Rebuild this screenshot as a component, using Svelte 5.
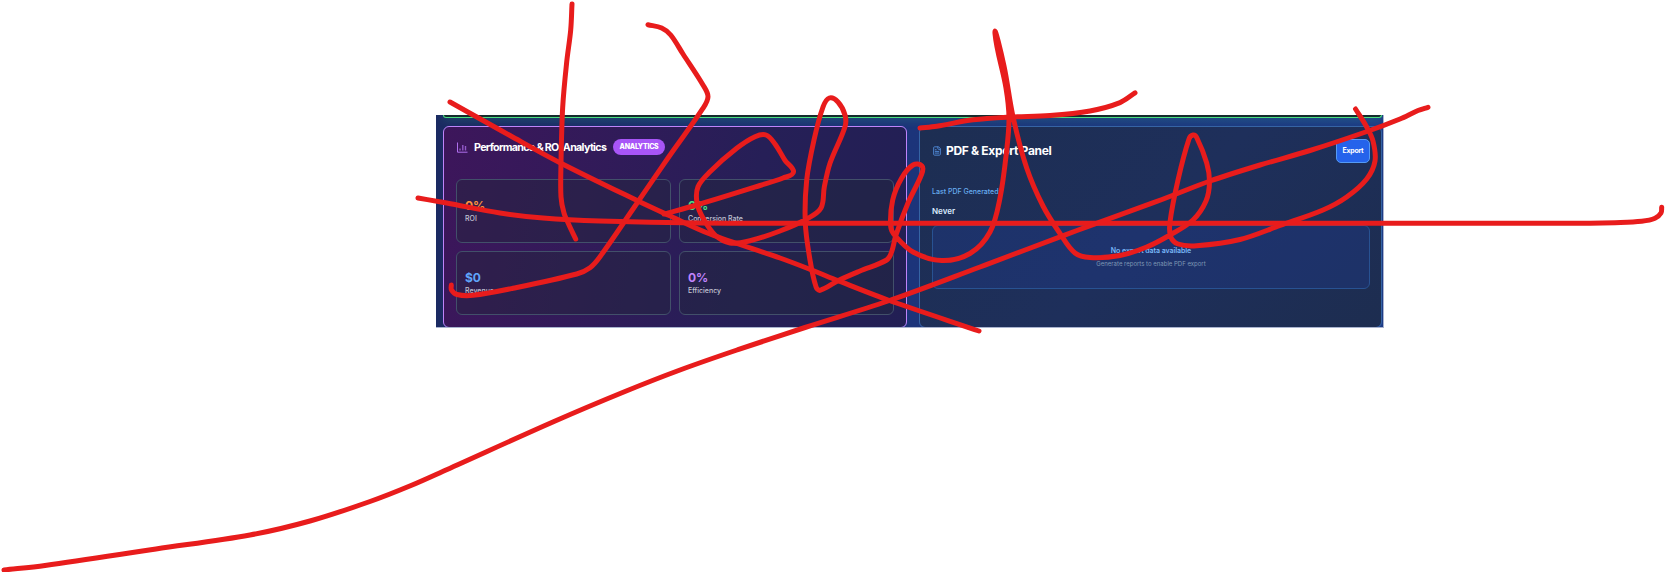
<script>
  const metrics = [
    { value: '0%', label: 'ROI', tone: 'orange' },
    { value: '0%', label: 'Conversion Rate', tone: 'green' },
    { value: '$0', label: 'Revenue', tone: 'blue' },
    { value: '0%', label: 'Efficiency', tone: 'purple' }
  ];

  // Pen strokes, each a list of "x,y" points joined by a smooth curve.
  const strokes = [
    '572,4 570.7,30 566.7,62 562.7,107 561,163 561,197 564,213 569,225 575.7,239',
    '648,24.7 661.7,28 670.7,35 683,54 703,85 708,96.7 702.7,108.7 668,158 633,209 600,256.7 590,267.7 576.7,274 513,288.3 473,295.3 457,294.5 451.5,290 451.3,285',
    '450,102 510,135.5 560,162.7 638,201 668,215 710,234 780,258 811.7,270 838,280.7 888,300 979,331',
    '418,198 446.7,203 500,213 543,218 600,221 700,223 900,223.3 1300,223.3 1590,223.2 1615,222.7 1641.7,221.3 1655,218.3 1661,213 1661.7,207.3',
    '664,214 696.7,205 760,185.5 783,178 793.5,172 785,160.3 775,144 766,135 755,136.7 736.7,148.3 710,171.7 698,186.7 697,203 703,218 715,235 730,243 750,240.7 780,231 806.7,219 821,208 824.3,187 830,163.3 845,126.7 845,115 838,102 829.3,98 823,107 814,140 806.7,180 805.3,223 810,260 816,286.7 820,290.3 838,280.7 860,271 886.7,260 891.7,251.7 896,235 908,203 921.7,174 922,166 913,165 901.7,178 892.7,200 890.7,226.7 895,235.7 913,252 941.7,260.5 970,253.5 990,232 1000,198 1006.7,150 1009,118 1006,88 995,33.5 1004,66 1013,116.7 1026.7,168 1043,206 1060,233.5 1075,253 1090,257.5 1120,255.5 1146.7,247 1170,235 1193,220 1206,201 1209.5,182 1206.7,163 1196.7,137.5 1193,135 1189,139 1178,180 1170,222 1170.7,236.7 1178,244 1196.7,245.7 1240,239.5 1280,225.5 1323,210 1346.7,197 1366.7,179 1375,161 1373,141 1366.7,127 1355.5,109',
    '920,128 936.7,126.2 973,119.8 1010,117 1050,115.6 1090,111 1120,102.6 1135,92.9',
    '4,570 45,565.5 156,549 250,535 310,521 370,501.5 411,485.5 446,470 554,421.5 625,391.5 680,370 737,350 805,327.5 888,301 980,267 1077,230.5 1162,199.5 1210,181 1260,165 1310,150.5 1367,131.5 1400,119 1418,110.5 1428,107.3'
  ].map(smooth);

  function smooth(text) {
    const p = text.split(' ').map((s) => s.split(',').map(Number));
    let d = `M${p[0]}`;
    for (let i = 0; i < p.length - 1; i++) {
      const a = p[Math.max(i - 1, 0)];
      const b = p[i];
      const c = p[i + 1];
      const e = p[Math.min(i + 2, p.length - 1)];
      const len = Math.hypot(c[0] - b[0], c[1] - b[1]);
      const before = Math.hypot(c[0] - a[0], c[1] - a[1]) || 1;
      const after = Math.hypot(e[0] - b[0], e[1] - b[1]) || 1;
      const k = len / 3;
      d += `C${b[0] + ((c[0] - a[0]) / before) * k} ${b[1] + ((c[1] - a[1]) / before) * k} ${c[0] - ((e[0] - b[0]) / after) * k} ${c[1] - ((e[1] - b[1]) / after) * k} ${c[0]} ${c[1]}`;
    }
    return d;
  }
</script>

<main>
  <section class="dashboard">
    <div class="previous"></div>
    <div class="columns">
      <article class="card analytics">
        <header>
          <svg class="chart" viewBox="0 0 11 11" fill="none" stroke="currentColor">
            <path d="M.5 .5V10.2H10.5" />
            <path d="M3 6.5V8.5M5.8 3V8.5M8.5 4V8.5" stroke-width="1.4" opacity=".75" />
          </svg>
          <h2>Performance &amp; ROI Analytics</h2>
          <span class="tag">ANALYTICS</span>
        </header>
        <div class="metrics">
          {#each metrics as m}
            <div class="metric">
              <strong class={m.tone}>{m.value}</strong>
              <span>{m.label}</span>
            </div>
          {/each}
        </div>
      </article>
      <article class="card export">
        <header>
          <svg class="doc" viewBox="0 0 24 24" fill="none" stroke="currentColor" stroke-width="2.4" stroke-linecap="round" stroke-linejoin="round">
            <path d="M15 2H6a2 2 0 0 0-2 2v16a2 2 0 0 0 2 2h12a2 2 0 0 0 2-2V7Z" />
            <path d="M14 2v4a2 2 0 0 0 2 2h4M10 9H8M16 13H8M16 17H8" />
          </svg>
          <h2>PDF &amp; Export Panel</h2>
          <button>Export</button>
        </header>
        <p class="caption">Last PDF Generated:</p>
        <p class="when">Never</p>
        <div class="empty">
          <p>No export data available</p>
          <small>Generate reports to enable PDF export</small>
        </div>
      </article>
    </div>
  </section>
  <svg class="ink" viewBox="0 0 1665 572">
    {#each strokes as d}
      <path {d} />
    {/each}
  </svg>
</main>

<style>
  :global(body) { background: #fff; }
  main {
    position: relative;
    box-sizing: border-box;
    width: 1665px;
    height: 572px;
    padding: 115px 0 0 436px;
    overflow: hidden;
    font-family: Inter, sans-serif;
    background: #fff;
  }
  .dashboard {
    box-sizing: border-box;
    width: 948px;
    height: 213px;
    padding: 0 0 0 7px;
    overflow: hidden;
    background: linear-gradient(90deg, #1b2a62, #1c347a 50%, #1d3b86);
    border: solid #a9b3cf;
    border-width: 0 1px 1px 0;
  }
  .previous {
    box-sizing: border-box;
    height: 3px;
    margin-right: 1px;
    background: #132b2c;
    border: solid #4ade80;
    border-width: 0 1px 1px;
    border-radius: 0 0 6px 6px;
    box-shadow: 0 1px 9px rgba(52, 190, 130, .45);
  }
  .columns {
    display: grid;
    grid-template-columns: 464px 463px;
    gap: 12px;
    padding-top: 8px;
  }
  .card {
    box-sizing: border-box;
    height: 202px;
    border: 1px solid;
    border-radius: 6px;
    padding: 0 12px;
  }
  .analytics {
    border-color: #bf84fa;
    background: linear-gradient(100deg, #3d165b, #261f57 65%, #221f54) padding-box;
  }
  .export {
    padding-right: 11px;
    border-color: #3664a4;
    background: linear-gradient(135deg, #1d2e52, #1e2f5b 50%, #1d2d50) padding-box;
  }
  header { display: flex; align-items: center; }
  h2 { margin: 0; color: #fff; white-space: nowrap; }
  .analytics header { height: 40px; padding-left: 1px; }
  .analytics h2 {
    margin-left: 6px;
    font-size: 10.7px;
    line-height: 14px;
    font-weight: 700;
    letter-spacing: -.68px;
    padding-top: 1px;
    width: 133px;
  }
  .chart { width: 11px; height: 11px; color: #b070ee; }
  .tag {
    margin-left: 6px;
    width: 52px;
    height: 16px;
    border-radius: 8px;
    background: #a855f7;
    color: #fff;
    font-size: 7px;
    line-height: 15px;
    font-weight: 800;
    letter-spacing: -.25px;
    text-align: center;
  }
  .metrics {
    display: grid;
    grid-template-columns: 215px 215px;
    grid-template-rows: 64px 64px;
    gap: 8px;
    padding-top: 12px;
  }
  .metric {
    box-sizing: border-box;
    border: 1px solid #42506a;
    border-radius: 6px;
    background: rgba(33, 40, 58, .42);
    padding: 18px 8px 0;
    display: flex;
    flex-direction: column;
  }
  .metric strong { font-size: 12px; line-height: 16px; font-weight: 700; }
  .metric span { color: #c2c3d3; font-size: 7px; line-height: 10px; font-weight: 500; }
  .orange { color: #fb923c; }
  .green { color: #4ade80; }
  .blue { color: #60a5fa; }
  .purple { color: #c084fc; }
  .export header { padding-top: 12px; height: 24px; }
  .doc { width: 10px; height: 10px; color: #4d84cf; }
  .export h2 { margin-left: 4px; font-size: 12px; line-height: 16px; font-weight: 700; letter-spacing: -.32px; }
  button {
    box-sizing: border-box;
    margin-left: auto;
    width: 34px;
    height: 24px;
    padding: 0 0 1px;
    border: 1px solid #559af4;
    border-radius: 5px;
    background: #2563eb;
    color: #fff;
    font: 700 7px Inter, sans-serif;
    letter-spacing: -.3px;
  }
  .export p { margin: 0; }
  .export .caption { margin-top: 24px; color: #68adf0; font-size: 7px; line-height: 10px; font-weight: 500; }
  .export .when { margin-top: 8px; color: #dbeafe; font-size: 8px; line-height: 12px; font-weight: 600; }
  .empty {
    box-sizing: border-box;
    height: 64px;
    margin-top: 8px;
    border: 1px solid #285292;
    border-radius: 6px;
    background: rgba(30, 58, 138, .4);
    text-align: center;
    padding-top: 19px;
  }
  .empty p { color: #7ab8f8; font-size: 7px; line-height: 11px; font-weight: 600; letter-spacing: -.06px; }
  .empty small { display: block; color: #7f98b4; font-size: 6px; line-height: 9px; margin-top: 3px; }
  .ink { position: absolute; left: 0; top: 0; width: 1665px; height: 572px; pointer-events: none; }
  .ink path { fill: none; stroke: #e81c1c; stroke-width: 5; stroke-linecap: round; stroke-linejoin: round; }
</style>
